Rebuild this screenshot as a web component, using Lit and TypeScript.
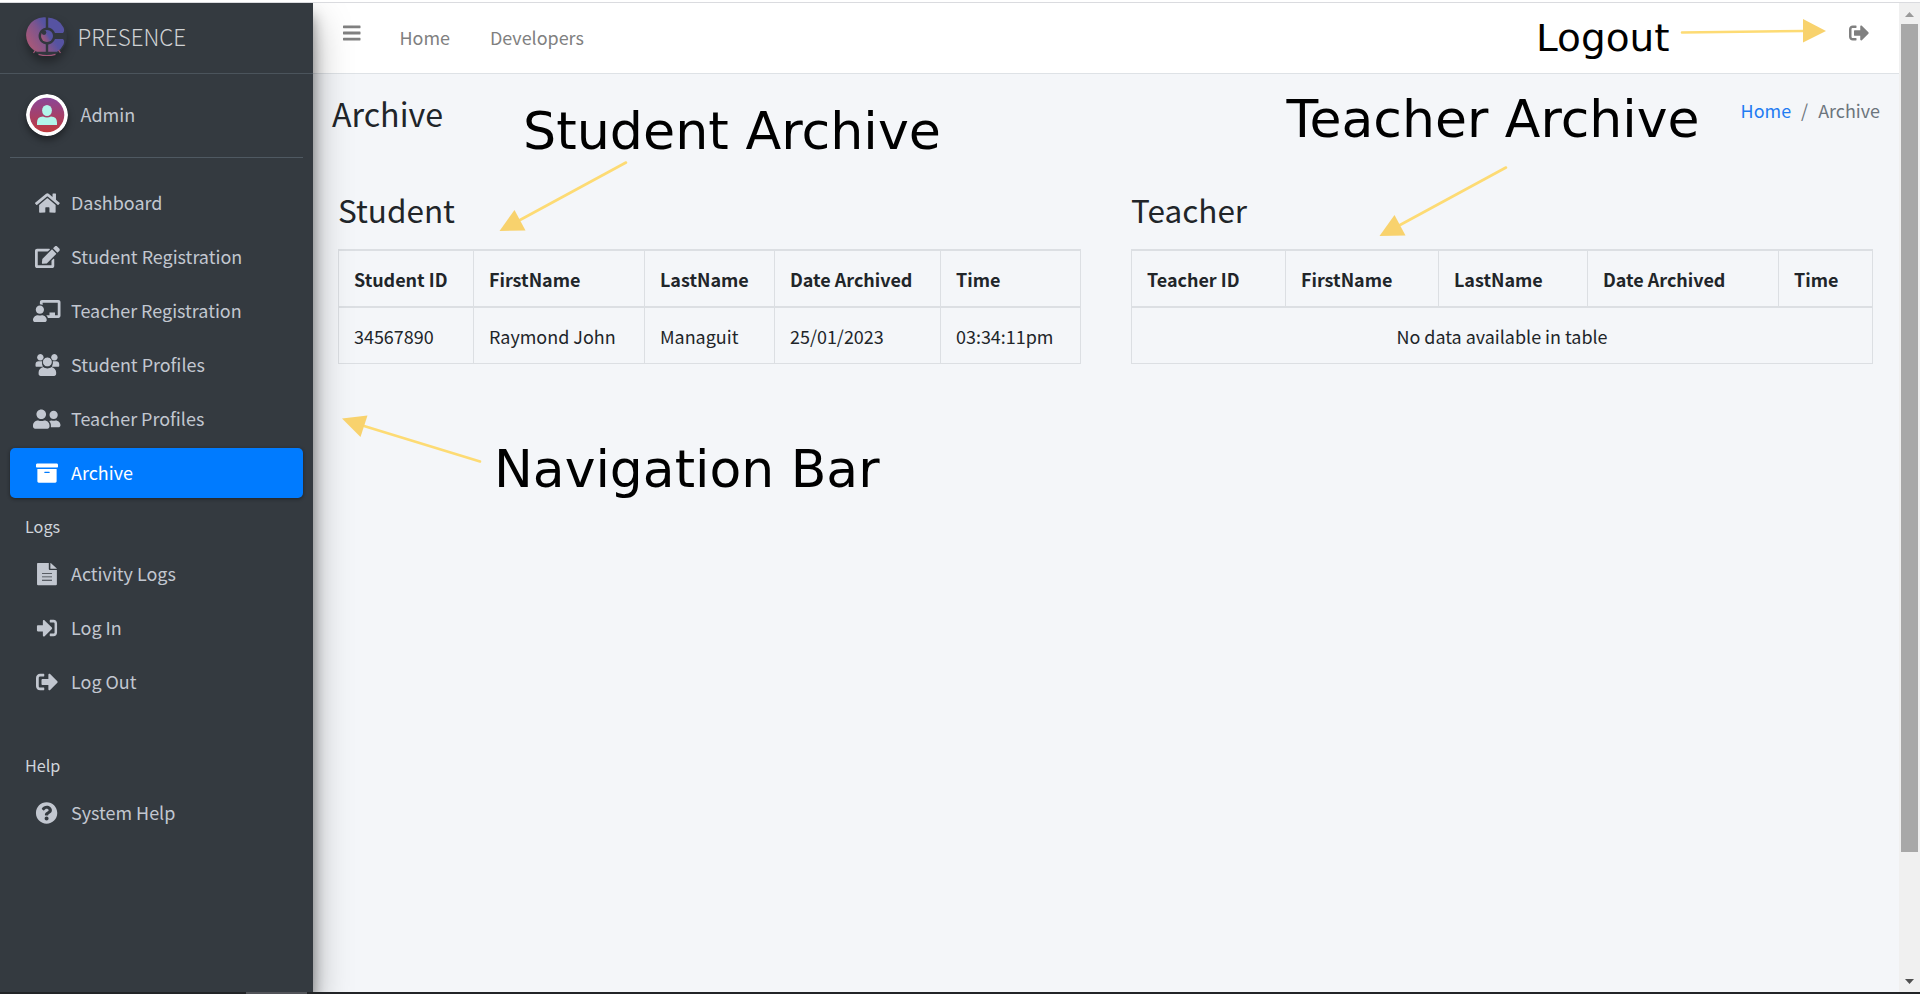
import { LitElement, html, svg, css, nothing } from "lit";
import { customElement, property } from "lit/decorators.js";

const ICONS: Record<string, { w: number; d: string }> = {
  home: {
    w: 576,
    d: "M280.37 148.26L96 300.11V464a16 16 0 0 0 16 16l112.06-.29a16 16 0 0 0 15.92-16V368a16 16 0 0 1 16-16h64a16 16 0 0 1 16 16v95.64a16 16 0 0 0 16 16.05L464 480a16 16 0 0 0 16-16V300L295.67 148.26a12.19 12.19 0 0 0-15.3 0zM571.6 251.47L488 182.56V44.05a12 12 0 0 0-12-12h-56a12 12 0 0 0-12 12v72.61L318.47 43a48 48 0 0 0-61 0L4.34 251.47a12 12 0 0 0-1.6 16.9l25.5 31A12 12 0 0 0 45.15 301l235.22-193.74a12.19 12.19 0 0 1 15.3 0L530.9 301a12 12 0 0 0 16.9-1.6l25.5-31a12 12 0 0 0-1.7-16.93z",
  },
  edit: {
    w: 576,
    d: "M402.6 83.2l90.2 90.2c3.8 3.8 3.8 10 0 13.8L274.4 405.6l-92.8 10.3c-12.4 1.4-22.9-9.1-21.5-21.5l10.3-92.8L388.8 83.2c3.8-3.8 10-3.8 13.8 0zm162-22.9l-48.8-48.8c-15.2-15.2-39.9-15.2-55.2 0l-35.4 35.4c-3.8 3.8-3.8 10 0 13.8l90.2 90.2c3.8 3.8 10 3.8 13.8 0l35.4-35.4c15.2-15.3 15.2-40 0-55.2zM384 346.2V448H64V128h229.8c3.2 0 6.2-1.3 8.5-3.5l40-40c7.6-7.6 2.2-20.5-8.5-20.5H48C21.5 64 0 85.5 0 112v352c0 26.5 21.5 48 48 48h352c26.5 0 48-21.5 48-48V306.2c0-10.7-12.9-16-20.5-8.5l-40 40c-2.2 2.3-3.5 5.3-3.5 8.5z",
  },
  board: {
    w: 640,
    d: "M208 352c-2.39 0-4.78.35-7.06 1.09C187.98 357.3 174.35 360 160 360c-14.35 0-27.98-2.7-40.95-6.91-2.28-.74-4.66-1.09-7.05-1.09C49.94 352-.33 402.48 0 464.62.14 490.88 21.73 512 48 512h224c26.27 0 47.86-21.12 48-47.38.33-62.14-49.94-112.62-112-112.62zm-48-32c53.02 0 96-42.98 96-96s-42.98-96-96-96-96 42.98-96 96 42.98 96 96 96zM592 0H208c-26.47 0-48 22.25-48 49.59V96c23.42 0 45.1 6.78 64 17.8V64h352v288h-64v-64H384v64h-76.24c19.1 16.69 33.12 38.73 39.69 64H592c26.47 0 48-22.25 48-49.59V49.59C640 22.25 618.47 0 592 0z",
  },
  group: {
    w: 576,
    d: "M125 0a76 76 0 1 0 0.1 0zM451 0a76 76 0 1 0 0.1 0zM288 76a108 108 0 1 0 0.1 0zM80 166C40 166 12 196 12 236v38c0 14 10 24 24 24h130c8 0 14-4 20-8-14-24-24-56-24-88 0-12 1-24 4-34-8-2-16-2-24-2zM496 166c40 0 68 30 68 70v38c0 14-10 24-24 24H410c-8 0-14-4-20-8 14-24 24-56 24-88 0-12-1-24-4-34 8-2 16-2 24-2zM196 302C130 316 84 364 84 424v44c0 26 20 44 46 44h316c26 0 46-18 46-44v-44c0-60-46-108-112-122-24 22-56 34-92 34s-68-12-92-34z",
  },
  users: {
    w: 640,
    d: "M192 256c61.9 0 112-50.1 112-112S253.9 32 192 32 80 82.1 80 144s50.1 112 112 112zm76.8 32h-8.3c-20.8 10-43.9 16-68.5 16s-47.6-6-68.5-16h-8.3C51.6 288 0 339.6 0 403.2V432c0 26.5 21.5 48 48 48h288c26.5 0 48-21.5 48-48v-28.8c0-63.6-51.6-115.2-115.2-115.2zM480 256c53 0 96-43 96-96s-43-96-96-96-96 43-96 96 43 96 96 96zm48 32h-3.8c-13.9 4.8-28.6 8-44.2 8s-30.3-3.2-44.2-8H432c-20.4 0-39.2 5.900-55.7 15.4 24.4 26.3 39.7 61.2 39.7 99.8v38.4c0 2.2-.5 4.3-.6 6.4H592c26.5 0 48-21.5 48-48 0-61.9-50.1-112-112-112z",
  },
  archive: {
    w: 512,
    d: "M32 448c0 17.7 14.3 32 32 32h384c17.7 0 32-14.3 32-32V160H32v288zm160-212c0-6.6 5.4-12 12-12h104c6.6 0 12 5.4 12 12v8c0 6.6-5.4 12-12 12H204c-6.6 0-12-5.4-12-12v-8zM480 32H32C14.3 32 0 46.3 0 64v48c0 8.8 7.2 16 16 16h480c8.8 0 16-7.2 16-16V64c0-17.7-14.3-32-32-32z",
  },
  file: {
    w: 512,
    d: "M42 0H298V140q0 24 24 24H486V494q0 26-26 26H50q-26 0-26-26V18Q24 0 42 0zM334 0q10 0 16 8L478 122q8 6 8 14H334zM140 236v22H372v-22zM140 312v22H372v-22zM140 390v22H372v-22z",
  },
  signin: {
    w: 512,
    d: "M408 448h-76c-6.6 0-12-5.4-12-12v-40c0-6.6 5.4-12 12-12h76c13 0 24-11 24-24V152c0-13-11-24-24-24h-76c-6.6 0-12-5.4-12-12V76c0-6.6 5.4-12 12-12h76c48 0 82 40 82 88v208c0 48-34 88-82 88zm-39-201L201 79c-15-15-41-4.5-41 17v96H42c-13 0-20 8-20 20v104c0 12 8 20 20 20h118v96c0 21.5 26 32 41 17l168-168c9.3-9.4 9.3-24.6 0-34z",
  },
  signout: {
    w: 512,
    d: "M497 273L329 441c-15 15-41 4.5-41-17v-96H152c-13.3 0-24-10.7-24-24v-96c0-13.3 10.7-24 24-24h136V88c0-21.4 25.9-32 41-17l168 168c9.3 9.4 9.3 24.6 0 34zM192 436v-40c0-6.6-5.4-12-12-12H96c-17.7 0-32-14.3-32-32V160c0-17.7 14.3-32 32-32h84c6.6 0 12-5.4 12-12V76c0-6.6-5.4-12-12-12H96c-53 0-96 43-96 96v192c0 53 43 96 96 96h84c6.6 0 12-5.4 12-12z",
  },
  help: {
    w: 540,
    d: "M518 256c0 136.997-111.043 248-248 248S22 392.997 22 256C22 119.083 133.043 8 270 8s248 111.083 248 248zM276.655 90c-54.497 0-89.255 22.957-116.549 63.758-3.536 5.286-2.353 12.415 2.715 16.258l34.699 26.31c5.205 3.947 12.621 3.008 16.665-2.122 17.864-22.658 30.113-35.797 57.303-35.797 20.429 0 45.698 13.148 45.698 32.958 0 14.976-12.363 22.667-32.534 33.976C261.128 238.528 230 254.941 230 296v4c0 6.627 5.373 12 12 12h56c6.627 0 12-5.373 12-12v-1.333c0-28.462 83.186-29.647 83.186-106.667 0-58.002-60.165-102-116.531-102zM270 338c-25.365 0-46 20.635-46 46 0 25.364 20.635 46 46 46s46-20.636 46-46c0-25.365-20.635-46-46-46z",
  },
  bars: {
    w: 448,
    d: "M12 64H436q12 0 12 12v48q0 12-12 12H12Q0 136 0 124V76Q0 64 12 64zM12 220H436q12 0 12 12v48q0 12-12 12H12Q0 292 0 280V232Q0 220 12 220zM12 376H436q12 0 12 12v48q0 12-12 12H12Q0 448 0 436V388Q0 376 12 376z",
  },
};

@customElement("fa-icon")
export class FaIcon extends LitElement {
  @property() name = "home";
  static styles = css`
    :host { display: inline-flex; height: 1em; }
    svg { height: 1em; display: block; fill: currentColor; fill-rule: evenodd; overflow: visible; }
    svg.solid { fill-rule: nonzero; }
  `;
  render() {
    const i = ICONS[this.name];
    return html`<svg class=${this.name === "group" ? "solid" : ""} viewBox="0 0 ${i.w} 512">
      <path d=${i.d}></path>
      ${this.name === "group"
        ? svg`<circle cx="288" cy="184" r="114" fill="none" stroke="#343a40" stroke-width="14"/>`
        : nothing}
    </svg>`;
  }
}

type Entry = { icon: string; label: string; active?: boolean };

@customElement("side-bar")
export class SideBar extends LitElement {
  static styles = css`
    :host {
      display: flex; flex-direction: column; width: 313px; flex: none; box-sizing: border-box;
      background: #343a40; color: #c2c7d0; z-index: 2;
      box-shadow: 0 17.5px 35px rgba(0, 0, 0, 0.35), 0 12.5px 12.5px rgba(0, 0, 0, 0.38);
    }
    .brand {
      display: flex; align-items: center; height: 70px; padding-left: 26px; gap: 9.500px;
      border-bottom: 1px solid #4b545c;
      font-size: 22.4px; font-weight: 300; color: #d0d2d4;
    }
    .logo { width: 42px; height: 42px; filter: drop-shadow(0 6px 5px rgba(0, 0, 0, 0.35)); margin-top: -5px; }
    .label { line-height: 30px; padding-bottom: 2px; }
    .brand .label { padding-bottom: 4px; }
    .user {
      display: flex; align-items: center; height: 83px; margin: 0 10px; padding-left: 16px; gap: 12.500px;
      border-bottom: 1px solid #4f5962; font-size: 18px;
    }
    .user .label { padding-bottom: 3px; }
    .avatar { width: 42px; height: 42px; border-radius: 50%; box-shadow: 0 4px 7px rgba(0, 0, 0, 0.4); margin-bottom: 1px; }
    .menu { display: flex; flex-direction: column; gap: 4px; padding: 20px 10px 0; }
    .item {
      display: flex; align-items: center; height: 50px; border-radius: 5px; font-size: 17.94px; padding-left: 21px;
    }
    .item.active {
      background: #007bff; color: #fff;
      box-shadow: 0 1px 4px rgba(0, 0, 0, 0.2), 0 1px 3px rgba(0, 0, 0, 0.24);
    }
    .icon { width: 32px; margin-right: 8px; display: flex; justify-content: center; font-size: 22px; padding-bottom: 1px; }
    .head { height: 43px; display: flex; align-items: flex-end; padding-left: 15px; font-size: 16.2px; color: #d0d4db; }
    .head span { line-height: 24px; margin-bottom: 7px; }
    .head.late { height: 73px; }
  `;
  private entry(e: Entry) {
    return html`<div class="item ${e.active ? "active" : ""}">
      <span class="icon"><fa-icon name=${e.icon}></fa-icon></span><span class="label">${e.label}</span>
    </div>`;
  }
  render() {
    return html`
      <div class="brand">
        <svg class="logo" viewBox="0 0 42 42">
          <defs>
            <linearGradient id="lg" x1="0" y1="0.8" x2="0.9" y2="0.3">
              <stop offset="0.1" stop-color="#a4587a" /><stop offset="0.45" stop-color="#80558c" />
              <stop offset="0.7" stop-color="#5653a2" />
            </linearGradient>
          </defs>
          <circle cx="21" cy="21" r="20" fill="#32373f" />
          <path fill="url(#lg)"
            d="M21 2.500a18 18 0 0 1 16.500 10q1.500 3.500-.5 5.500H29a8.500 8.500 0 1 0 0 6H37q2 2 .5 5.500A18 18 0 0 1 31 36.800H11A18 18 0 0 1 21 2.500z" />
          <path d="M21 2v12M21 27v10.500" stroke="#32373f" stroke-width="2.400" />
          <circle cx="21" cy="21" r="6" fill="url(#lg)" />
          <circle cx="18" cy="17.600" r="2.300" fill="#32373f" />
          <path d="M9.500 35l-2 3M32.500 35l2 3M12.500 39.300q8.500 2.400 17 0" stroke="#a4587a" stroke-width="1.200" fill="none" />
        </svg>
        <span class="label">PRESENCE</span>
      </div>
      <div class="user">
        <svg class="avatar" viewBox="0 0 42 42">
          <defs>
            <linearGradient id="av" x1="0" y1="0" x2="0" y2="1">
              <stop offset="0" stop-color="#8a4698" /><stop offset="1" stop-color="#bf3a3e" />
            </linearGradient>
          </defs>
          <circle cx="21" cy="21" r="21" fill="#fff" />
          <circle cx="21" cy="21" r="17.300" fill="url(#av)" />
          <ellipse cx="21" cy="16.500" rx="4.900" ry="5.600" fill="#b2f5ea" />
          <path d="M11 31v-2.500q0-6 6-6 4 1.800 8 0 6 0 6 6V31z" fill="#b2f5ea" />
        </svg>
        <span class="label">Admin</span>
      </div>
      <div class="menu">
        ${[
          { icon: "home", label: "Dashboard" },
          { icon: "edit", label: "Student Registration" },
          { icon: "board", label: "Teacher Registration" },
          { icon: "group", label: "Student Profiles" },
          { icon: "users", label: "Teacher Profiles" },
          { icon: "archive", label: "Archive", active: true },
        ].map((e) => this.entry(e))}
        <div class="head"><span>Logs</span></div>
        ${[
          { icon: "file", label: "Activity Logs" },
          { icon: "signin", label: "Log In" },
          { icon: "signout", label: "Log Out" },
        ].map((e) => this.entry(e))}
        <div class="head late"><span>Help</span></div>
        ${this.entry({ icon: "help", label: "System Help" })}
      </div>
    `;
  }
}

@customElement("archive-table")
export class ArchiveTable extends LitElement {
  @property() heading = "";
  @property({ attribute: false }) columns: { name: string; width: number }[] = [];
  @property({ attribute: false }) rows: string[][] = [];
  static styles = css`
    :host { display: block; color: #212529; }
    h3 { margin: 0 0 19px; font-size: 31.5px; line-height: 42px; font-weight: 400; }
    table { border-collapse: separate; border-spacing: 0; table-layout: fixed; border-right: 1px solid #dcdfe3; font-size: 17.94px; line-height: 30px; }
    th, td { box-sizing: border-box; padding: 0 0 0 15px; text-align: left; border-left: 1px solid #dcdfe3; white-space: nowrap; }
    th { height: 59px; border-top: 2px solid #dcdfe3; border-bottom: 2px solid #dcdfe3; font-weight: 700; }
    td { height: 56px; border-bottom: 1px solid #dcdfe3; }
    td.empty { text-align: center; padding: 0; }
  `;
  render() {
    const total = this.columns.reduce((s, c) => s + c.width, 1);
    return html`
      <h3>${this.heading}</h3>
      <table style="width:${total}px">
        <colgroup>${this.columns.map((c) => html`<col style="width:${c.width}px" />`)}</colgroup>
        <thead><tr>${this.columns.map((c) => html`<th>${c.name}</th>`)}</tr></thead>
        <tbody>
          ${this.rows.length
            ? this.rows.map((r) => html`<tr>${r.map((v) => html`<td>${v}</td>`)}</tr>`)
            : html`<tr><td class="empty" colspan=${this.columns.length}>No data available in table</td></tr>`}
        </tbody>
      </table>
    `;
  }
}

@customElement("app-root")
export class AppRoot extends LitElement {
  static styles = css`
    :host {
      display: flex; flex-direction: column; position: relative; box-sizing: border-box;
      width: 1920px; height: 994px; overflow: hidden; background: #fff;
      font-family: "Noto Sans CJK SC", "Open Sans", sans-serif; color: #212529;
    }
    .edge { height: 1px; margin-top: 2px; background: #dadbdf; flex: none; }
    .frame { display: flex; flex: 1; min-height: 0; overflow: hidden; }
    .main { flex: 1; display: flex; flex-direction: column; background: #f4f6f9; }
    .top {
      display: flex; height: 70px; background: #fff; border-bottom: 1px solid #dee2e6;
      color: #808080; font-size: 17.94px; line-height: 30px; padding: 0 30px 0 29.500px;
    }
    .top fa-icon { font-size: 20px; margin-top: 19.500px; }
    .links { display: flex; gap: 40px; margin: 19px auto 0 39.500px; }
    .title { display: flex; justify-content: space-between; padding: 17px 19px 0 19px; height: 92px; box-sizing: border-box; }
    h1 { margin: 0; font-size: 32.200px; line-height: 44px; font-weight: 400; }
    .crumbs { display: flex; gap: 10px; font-size: 17.94px; line-height: 30px; margin-top: 4px; color: #6c757d; }
    .crumbs a { color: #1f7cf2; }
    .tables { display: flex; gap: 50px; padding: 22px 0 0 25px; }
    .scroll { width: 21px; background: #f0f0f0; display: flex; flex-direction: column; align-items: center; flex: none; }
    .scroll svg { display: block; flex: none; }
    .thumb { width: 17px; height: 828px; background: #a8a8a8; margin-bottom: auto; }
    .bottom { display: flex; height: 2px; flex: none; background: #222427; padding-left: 246px; z-index: 3; }
    .bottom i { width: 61px; background: #525459; }
    .notes { position: absolute; left: 0; top: 0; width: 1920px; height: 994px; z-index: 4; pointer-events: none; }
    .notes text { font-family: "DejaVu Sans", Verdana, sans-serif; font-size: 51.500px; fill: #000; }
    .notes text.small { font-size: 38px; }
    .notes line { stroke: #fddb74; stroke-width: 2.600; stroke-linecap: round; }
    .notes polygon { fill: #f8d26d; }
  `;
  private arrow(x1: number, y1: number, x2: number, y2: number, head: string) {
    return svg`<line x1=${x1} y1=${y1} x2=${x2} y2=${y2} /><polygon points=${head} />`;
  }
  render() {
    return html`
      <div class="edge"></div>
      <div class="frame">
        <side-bar></side-bar>
        <div class="main">
          <div class="top">
            <fa-icon name="bars"></fa-icon>
            <div class="links"><span>Home</span><span>Developers</span></div>
            <fa-icon name="signout"></fa-icon>
          </div>
          <div class="title">
            <h1>Archive</h1>
            <div class="crumbs"><a>Home</a><span>/</span><span>Archive</span></div>
          </div>
          <div class="tables">
            <archive-table heading="Student"
              .columns=${[
                { name: "Student ID", width: 135 },
                { name: "FirstName", width: 171 },
                { name: "LastName", width: 130 },
                { name: "Date Archived", width: 166 },
                { name: "Time", width: 140 },
              ]}
              .rows=${[["34567890", "Raymond John", "Managuit", "25/01/2023", "03:34:11pm"]]}></archive-table>
            <archive-table heading="Teacher"
              .columns=${[
                { name: "Teacher ID", width: 154 },
                { name: "FirstName", width: 153 },
                { name: "LastName", width: 149 },
                { name: "Date Archived", width: 191 },
                { name: "Time", width: 94 },
              ]}></archive-table>
          </div>
        </div>
        <div class="scroll">
          <svg width="21" height="21" viewBox="0 0 21 21"><path d="M6 14l4.500-5 4.500 5z" fill="#9a9a9a" /></svg>
          <div class="thumb"></div>
          <svg width="21" height="21" viewBox="0 0 21 21"><path d="M6 8l4.500 5 4.500-5z" fill="#505050" /></svg>
        </div>
      </div>
      <div class="bottom"><i></i></div>
      <svg class="notes" viewBox="0 0 1920 994">
        ${this.arrow(626, 162.5, 520, 220, "499.5,231 514.5,210 525.5,230.5")}
        ${this.arrow(1506, 167.5, 1400, 225, "1379.500,236 1394.500,215 1405.500,235.500")}
        ${this.arrow(480, 461.5, 364, 426, "342,418.5 367.500,415.500 360.500,437")}
        ${this.arrow(1682, 32.5, 1804, 31, "1803,19 1803,42.500 1826,31")}
        <text x="523" y="149" textLength="418" lengthAdjust="spacingAndGlyphs">Student Archive</text>
        <text x="1286.500" y="136.700" textLength="413" lengthAdjust="spacingAndGlyphs">Teacher Archive</text>
        <text x="494" y="487" textLength="385.500" lengthAdjust="spacingAndGlyphs">Navigation Bar</text>
        <text class="small" x="1536" y="50.500" textLength="133.500" lengthAdjust="spacingAndGlyphs">Logout</text>
      </svg>
    `;
  }
}
